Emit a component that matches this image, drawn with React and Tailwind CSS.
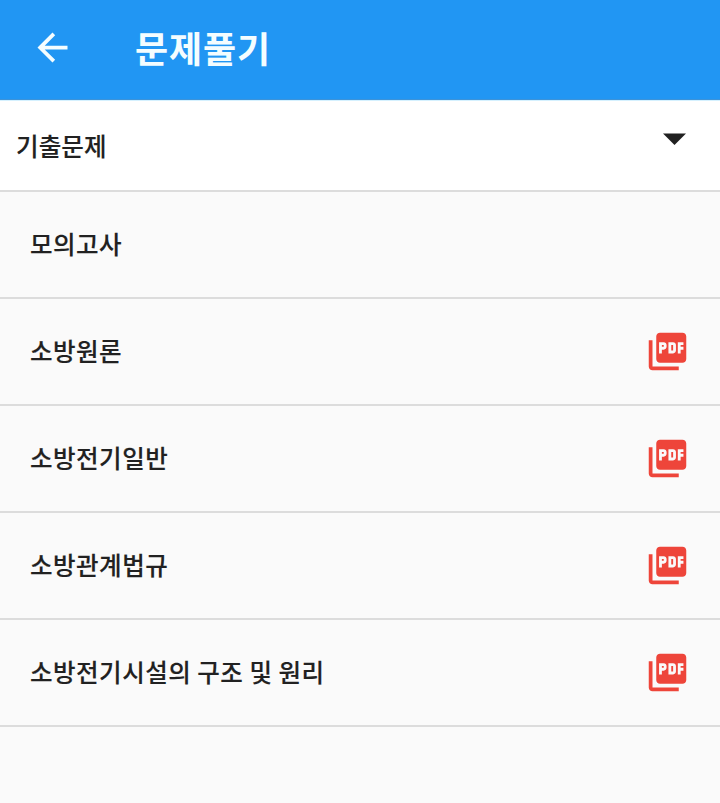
import React from "react";
import { MdArrowBack, MdPictureAsPdf } from "react-icons/md";

const subjects = [
  { title: "모의고사", pdf: false },
  { title: "소방원론", pdf: true },
  { title: "소방전기일반", pdf: true },
  { title: "소방관계법규", pdf: true },
  { title: "소방전기시설의 구조 및 원리", pdf: true },
];

export default function App() {
  return (
    <div className="h-screen overflow-hidden bg-[#fafafa] font-['Noto_Sans_CJK_KR',sans-serif] font-medium text-[#212121]">
      <header className="flex h-[100px] items-center border-b border-[#3d93d8] bg-[#2196f3] pb-1 pl-[30px] text-[#f4fdff]">
        <MdArrowBack className="size-[45px]" />
        <h1 className="pb-px pl-[60px] text-[36px] font-bold leading-none tracking-[0.9px]">문제풀기</h1>
      </header>

      <div className="flex h-[92px] items-center justify-between border-b-2 border-t border-b-[#dcdcdc] border-t-[#d5f1ff] bg-white pl-4 pr-[34px]">
        <span className="pt-px text-[24.5px] leading-none tracking-[0.1px] [-webkit-text-stroke:0.15px]">기출문제</span>
        <svg width="23" height="12" viewBox="0 0 23 12" className="mb-[14px]">
          <path d="M0 .5h23L11.5 12z" fill="#212121" />
        </svg>
      </div>

      <ul>
        {subjects.map((s) => (
          <li key={s.title} className="flex h-[107px] items-center justify-between border-b-2 border-[#dcdcdc] pl-[30px] pr-[30px]">
            <span className="pb-px text-[24.5px] leading-none tracking-[0.5px] [-webkit-text-stroke:0.15px]">{s.title}</span>
            {s.pdf && <MdPictureAsPdf className="mb-px size-[45px] text-[#ee453a]" />}
          </li>
        ))}
      </ul>
    </div>
  );
}
